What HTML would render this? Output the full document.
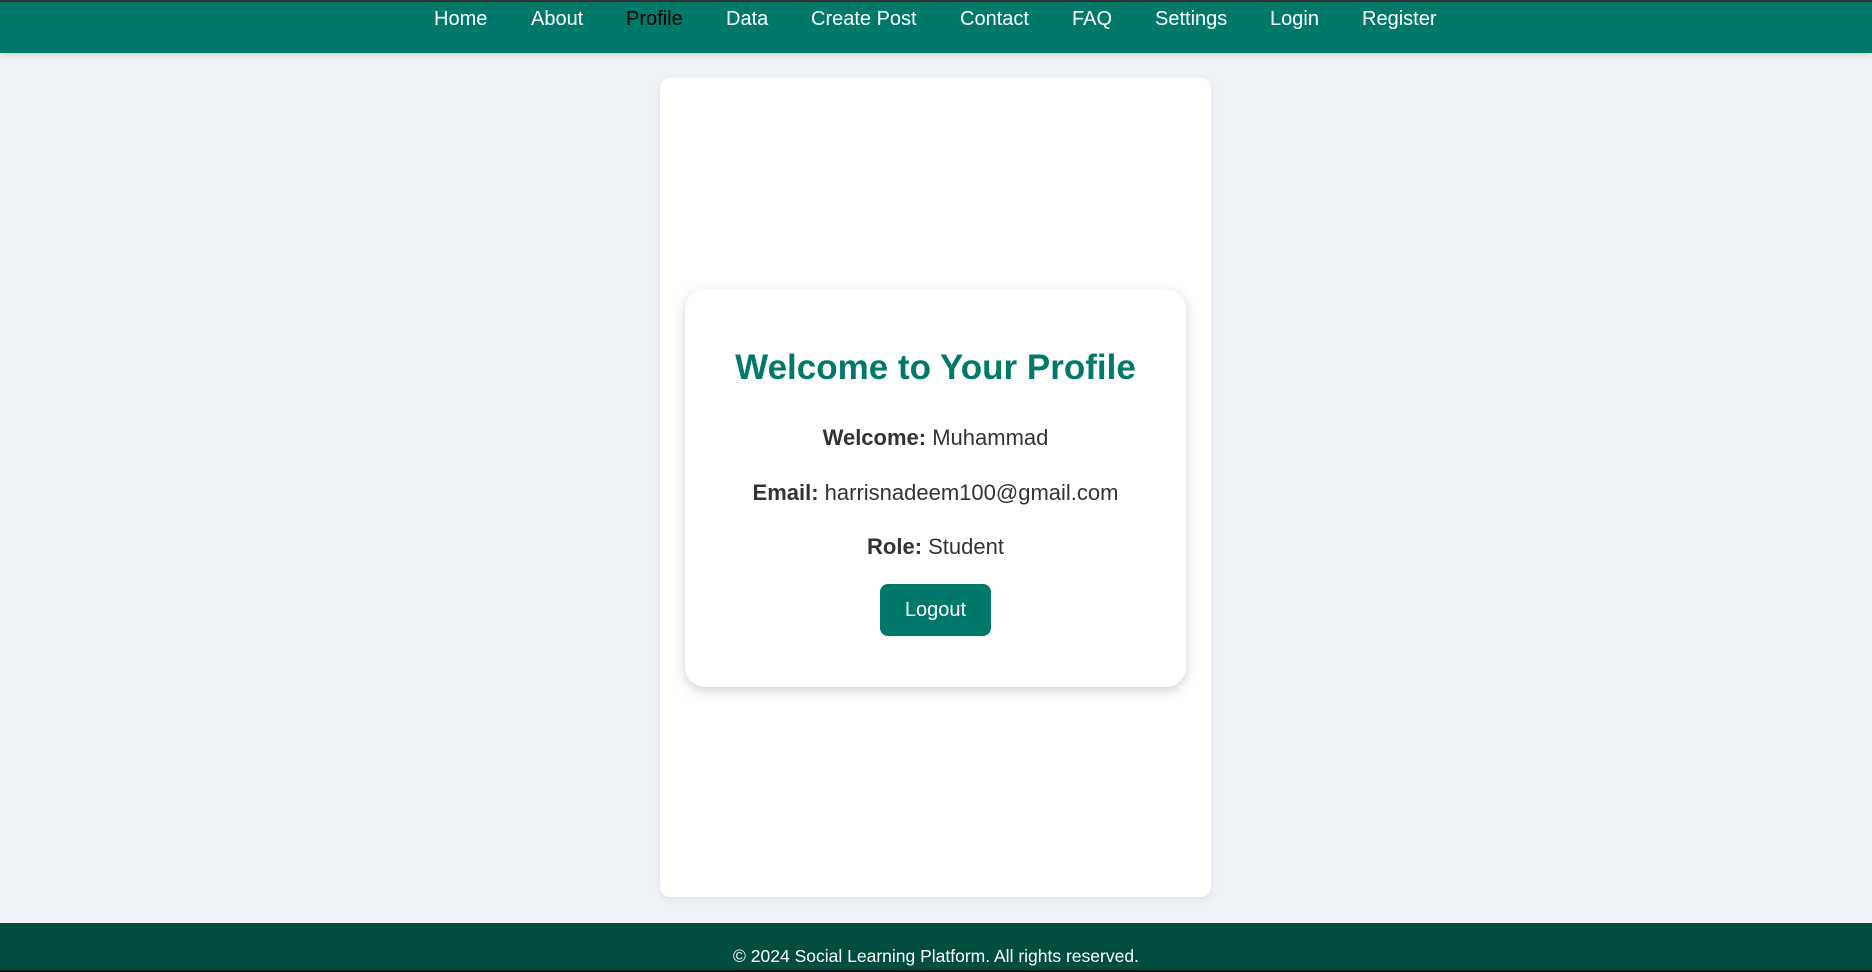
<!DOCTYPE html>
<html><head><meta charset="utf-8"><style>
*{margin:0;padding:0;box-sizing:border-box}
body{width:1872px;height:972px;background:#eef2f7;font-family:"Liberation Sans",Arial,sans-serif;position:relative;overflow:hidden}
nav{position:absolute;left:0;top:0;width:1872px;height:53px;background:#00796b;border-top:2px solid #333;box-shadow:0 2px 6px rgba(0,0,0,.15)}
nav a{position:absolute;top:5px;font-size:20px;color:#fff;text-decoration:none;line-height:24px}
.outer{position:absolute;left:660px;top:78px;width:551px;height:819px;background:#fff;border-radius:10px;box-shadow:0 2px 8px rgba(0,0,0,.08)}
.inner{position:absolute;left:685px;top:289px;width:501px;height:398px;background:#fff;border-radius:20px;box-shadow:0 4px 12px rgba(0,0,0,.18);text-align:center;color:#333}
h1{position:absolute;left:0;right:0;top:59px;font-size:35px;color:#00796b;font-weight:bold}
p{position:absolute;left:0;right:0;font-size:22px}
.btn{position:absolute;left:195px;top:295px;width:111px;height:52px;background:#00796b;color:#fff;border-radius:8px;font-size:20px;line-height:53px}
footer{position:absolute;left:0;top:923px;width:1872px;height:49px;background:#004d40;color:#fff;font-size:17.5px;text-align:center;line-height:20px;padding-top:23px;border-bottom:2px solid #111}
</style></head><body>
<nav>
<a style="left:434px">Home</a>
<a style="left:531px">About</a>
<a style="left:626px;color:#000">Profile</a>
<a style="left:726px">Data</a>
<a style="left:811px">Create Post</a>
<a style="left:960px">Contact</a>
<a style="left:1072px">FAQ</a>
<a style="left:1155px">Settings</a>
<a style="left:1270px">Login</a>
<a style="left:1362px">Register</a>
</nav>
<div class="outer"></div>
<div class="inner">
<h1>Welcome to Your Profile</h1>
<p style="top:136px"><b>Welcome:</b> Muhammad</p>
<p style="top:191px"><b>Email:</b> harrisnadeem100@gmail.com</p>
<p style="top:245px"><b>Role:</b> Student</p>
<div class="btn">Logout</div>
</div>
<footer>© 2024 Social Learning Platform. All rights reserved.</footer>
</body></html>
